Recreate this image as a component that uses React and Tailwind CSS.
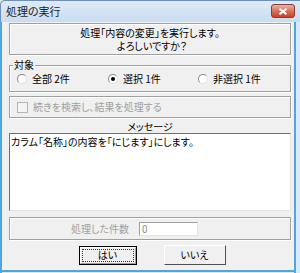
export default function App() {
  const font = { fontFamily: '"Noto Sans CJK JP", "Noto Sans", sans-serif', fontFeatureSettings: '"palt"' };
  const etched = "border border-[#a0a0a0] shadow-[inset_1px_1px_0_#ffffff,1px_1px_0_#ffffff]";
  return (
    <div className="w-[300px] h-[273px] bg-[#dbe9f7] flex flex-col overflow-hidden text-[10px] leading-[12px] text-black" style={font}>
      {/* title bar */}
      <div className="h-[22px] shrink-0 flex items-start justify-between pl-[5px] pr-[5px] bg-gradient-to-b from-[#dfeaf8] to-[#c9dcf1] border-t border-l border-[#6f8fb5] rounded-tl-[5px]">
        <span className="mt-[4px] text-[11px] leading-[13px] text-[#1e1e1e]">処理の実行</span>
        <div className="mt-[3px] w-[24px] h-[14px] rounded-[3px] border border-[#8e3a2e] bg-gradient-to-b from-[#eab2a6] via-[#d5735f] to-[#c2412b] flex items-center justify-center">
          <svg width="10" height="7" viewBox="0 0 10 7">
            <path d="M1.5 0.8 L8.5 6.2 M8.5 0.8 L1.5 6.2" stroke="#ffffff" strokeWidth="2" />
          </svg>
        </div>
      </div>
      {/* body */}
      <div className="flex-1 flex">
        <div className="w-[2px] bg-[#4aa8dc]" />
        <div className="flex-1 flex flex-col">
          {/* client */}
          <div className="h-[248px] bg-[#f0f0f0] flex flex-col pl-[7px] pr-[3px]">
            {/* message box */}
            <div className={`mt-[1px] h-[32px] ${etched} flex flex-col items-center justify-center gap-[1px]`}>
              <div className="leading-[12px]">処理「内容の変更」を実行します。</div>
              <div className="pl-[4px] leading-[12px]">よろしいですか？</div>
            </div>
            {/* group 対象 */}
            <div className={`relative mt-[10px] h-[27px] ${etched} flex items-center`}>
              <span className="absolute -top-[7px] left-[3px] bg-[#f0f0f0] px-[1px] leading-[12px]">対象</span>
              <div className="flex items-center w-full pt-[1px]">
                <label className="flex items-center gap-[5px] ml-[7px] w-[91px]">
                  <Radio />
                  <span>全部 2件</span>
                </label>
                <label className="flex items-center gap-[5px] w-[90px]">
                  <Radio checked />
                  <span>選択 1件</span>
                </label>
                <label className="flex items-center gap-[5px]">
                  <Radio />
                  <span>非選択 1件</span>
                </label>
              </div>
            </div>
            {/* checkbox box */}
            <div className={`mt-[4px] h-[22px] ${etched} flex items-center pl-[7px] gap-[5px] text-[#a0a0a0]`}>
              <div className="w-[11px] h-[11px] border border-[#b4b4b4] bg-[#f4f4f4]" />
              <span>続きを検索し、結果を処理する</span>
            </div>
            {/* message label */}
            <div className="mt-[3px] h-[12px] text-center leading-[12px]">メッセージ</div>
            {/* textarea */}
            <div className="mt-[0px] h-[78px] bg-white border border-[#6f6f6f] border-r-[#e3e3e3] border-b-[#e3e3e3] px-[1px] pt-[2px] leading-[12px]">
              カラム「名称」の内容を「にじます」にします。
            </div>
            {/* count box */}
            <div className={`mt-[6px] h-[23px] ${etched} flex items-center justify-end pr-[92px] gap-[10px]`}>
              <span className="text-[#a0a0a0]">処理した件数</span>
              <div className="w-[59px] h-[14px] bg-white border border-[#a0a0a0] border-r-[#e3e3e3] border-b-[#e3e3e3] text-[#8a8a8a] pl-[2px] leading-[12px]">0</div>
            </div>
            {/* buttons */}
            <div className="mt-[5px] flex items-center justify-center gap-[27px] pl-[4px]">
              <button className="relative w-[58px] h-[19px] border border-black bg-[#f0f0f0] flex items-center justify-center text-[10px]" style={font}>
                <div className="absolute inset-0 border border-white border-r-[#a0a0a0] border-b-[#a0a0a0]" />
                <div className="absolute inset-[2px] border border-dotted border-[#333]" />
                <span className="relative">はい</span>
              </button>
              <button className="w-[62px] h-[20px] border border-white border-r-[#505050] border-b-[#505050] bg-[#f0f0f0] flex items-center justify-center text-[10px]" style={font}>
                いいえ
              </button>
            </div>
          </div>
          <div className="h-[2px] bg-[#4aa8dc]" />
        </div>
        <div className="w-[2px] bg-[#4aa8dc]" />
        <div className="w-[4px] bg-[#dbe9f7]" />
      </div>
    </div>
  );
}

function Radio({ checked }) {
  return (
    <div className="w-[10px] h-[10px] rounded-full border border-[#8a8a8a] border-r-[#e0e0e0] border-b-[#e0e0e0] bg-white flex items-center justify-center">
      {checked && <div className="w-[4px] h-[4px] rounded-full bg-black" />}
    </div>
  );
}
